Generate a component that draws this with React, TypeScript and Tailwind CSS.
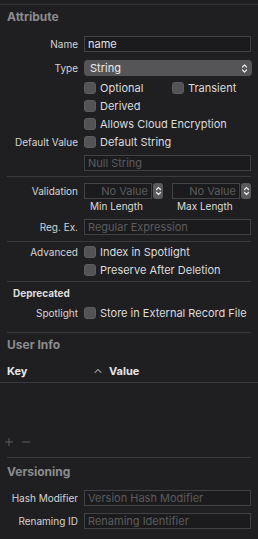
import React from "react";

const Check = ({ label }: { label: string }) => (
  <div className="flex items-center gap-[4px]">
    <div className="w-[12px] h-[12px] rounded-[3px] bg-[#535355] border border-[#5e5e60]" />
    <span className="text-[#dcdcdc]">{label}</span>
  </div>
);

const Row = ({ label, children, className = "" }: { label?: string; children?: React.ReactNode; className?: string }) => (
  <div className={"flex items-center " + className}>
    <div className="w-[78px] text-right text-[#d4d4d4] whitespace-nowrap text-[10px]">{label}</div>
    <div className="ml-[6px] flex-1 flex items-center">{children}</div>
  </div>
);

const Field = ({ text, placeholder }: { text?: string; placeholder?: string }) => (
  <div className="w-[167px] h-[16px] border border-[#424244] bg-[#1b1b1d] flex items-center px-[3px]">
    {text ? <span className="text-[#e2e2e2]">{text}</span> : <span className="text-[#5c5c5e]">{placeholder}</span>}
  </div>
);

const Stepper = () => (
  <div className="w-[10px] h-[16px] rounded-[3px] bg-[#5a5a5c] flex flex-col items-center justify-center">
    <svg width="7" height="12" viewBox="0 0 7 12" fill="none" stroke="#e8e8e8" strokeWidth="1.2" strokeLinecap="round" strokeLinejoin="round">
      <path d="M1.5 4.5 L3.5 2.5 L5.5 4.5" />
      <path d="M1.5 7.5 L3.5 9.5 L5.5 7.5" />
    </svg>
  </div>
);

const Sep = ({ className = "" }: { className?: string }) => (
  <div className={"h-px bg-[#3a3a3c] mx-[7px] " + className} />
);

export default function App() {
  return (
    <div
      className="w-[258px] h-[539px] bg-[#1f1f21] text-[11px] leading-[13px] overflow-hidden flex flex-col"
      style={{ fontFamily: "Inter, 'Liberation Sans', sans-serif" }}
    >
      <div className="h-[4px]" />
      <div className="h-px bg-[#343436]" />
      <div className="h-[23px] flex items-center pl-[7px] font-bold text-[12px] text-[#8c8c8e]">Attribute</div>
      <Row label="Name" className="mt-[8px] h-[16px]">
        <Field text="name" />
      </Row>
      <Row label="Type" className="mt-[8px] h-[16px]">
        <div className="w-[168px] h-[16px] rounded-[4px] bg-[#555557] flex items-center justify-between pl-[6px] pr-[4px]">
          <span className="text-[#ececec]">String</span>
          <svg width="7" height="11" viewBox="0 0 7 11" fill="none" stroke="#e8e8e8" strokeWidth="1.2" strokeLinecap="round" strokeLinejoin="round">
            <path d="M1.5 4 L3.5 2 L5.5 4" />
            <path d="M1.5 7 L3.5 9 L5.5 7" />
          </svg>
        </div>
      </Row>
      <Row className="mt-[3px] h-[18px]">
        <div className="w-[88px]"><Check label="Optional" /></div>
        <Check label="Transient" />
      </Row>
      <Row className="h-[18px]">
        <Check label="Derived" />
      </Row>
      <Row className="h-[18px]">
        <Check label="Allows Cloud Encryption" />
      </Row>
      <Row label="Default Value" className="h-[18px]">
        <Check label="Default String" />
      </Row>
      <Row className="mt-[4px] h-[16px]">
        <Field placeholder="Null String" />
      </Row>
      <Sep className="mt-[5px]" />
      <Row label="Validation" className="mt-[6px] h-[16px]">
        <div className="w-[68px] h-[16px] border border-[#424244] bg-[#1b1b1d] flex items-center justify-end pr-[3px] text-[#5c5c5e]">No Value</div>
        <div className="ml-[1px]"><Stepper /></div>
        <div className="w-[68px] h-[16px] border border-[#424244] bg-[#1b1b1d] flex items-center justify-end pr-[3px] text-[#5c5c5e] ml-[9px]">No Value</div>
        <div className="ml-[1px]"><Stepper /></div>
      </Row>
      <Row className="h-[14px] text-[10px]">
        <div className="w-[93px] pl-[6px] text-[#dcdcdc]">Min Length</div>
        <div className="text-[#dcdcdc]">Max Length</div>
      </Row>
      <Row label="Reg. Ex." className="mt-[6px] h-[16px]">
        <Field placeholder="Regular Expression" />
      </Row>
      <Sep className="mt-[6px]" />
      <Row label="Advanced" className="mt-[1px] h-[18px]">
        <Check label="Index in Spotlight" />
      </Row>
      <Row className="h-[18px]">
        <Check label="Preserve After Deletion" />
      </Row>
      <Sep className="mt-[2px]" />
      <div className="h-[22px] flex items-center pl-[13px] font-bold text-[10px] text-[#dedede]">Deprecated</div>
      <Row label="Spotlight" className="h-[18px]">
        <Check label="Store in External Record File" />
      </Row>
      <Sep className="mt-[10px]" />
      <div className="h-[23px] flex items-center pl-[7px] font-bold text-[12px] text-[#8c8c8e]">User Info</div>
      <div className="mt-[4px] h-[22px] flex items-center font-bold text-[#e6e6e6]">
        <div className="pl-[7px] w-[94px]">Key</div>
        <svg width="8" height="6" viewBox="0 0 8 6" fill="none" stroke="#8c8c8e" strokeWidth="1.1" strokeLinecap="round" strokeLinejoin="round">
          <path d="M1 4.5 L4 1.5 L7 4.5" />
        </svg>
        <div className="ml-[7px]">Value</div>
      </div>
      <div className="h-px bg-[#3a3a3c]" />
      <div className="h-[51px]" />
      <div className="h-[16px] flex items-center gap-[7px] pl-[4px] text-[#5c5c5e]">
        <svg width="10" height="10" viewBox="0 0 10 10" stroke="#5e5e60" strokeWidth="1">
          <path d="M5 1 V9 M1 5 H9" />
        </svg>
        <svg width="10" height="10" viewBox="0 0 10 10" stroke="#5e5e60" strokeWidth="1">
          <path d="M1 5 H9" />
        </svg>
      </div>
      <Sep className="mt-[7px]" />
      <div className="h-[27px] flex items-center pl-[7px] font-bold text-[12px] text-[#8c8c8e]">Versioning</div>
      <Row label="Hash Modifier" className="mt-[5px] h-[16px]">
        <Field placeholder="Version Hash Modifier" />
      </Row>
      <Row label="Renaming ID" className="mt-[7px] h-[16px]">
        <Field placeholder="Renaming Identifier" />
      </Row>
    </div>
  );
}
